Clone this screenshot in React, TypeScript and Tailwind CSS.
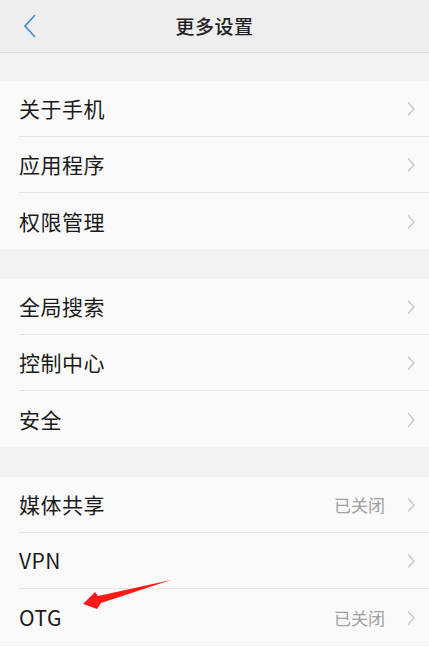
import React from "react";

const font = { fontFamily: '"Noto Sans CJK SC", "Noto Sans", Roboto, sans-serif' };

type Row = { label: string; value?: string };

const sections: Row[][] = [
  [{ label: "关于手机" }, { label: "应用程序" }, { label: "权限管理" }],
  [{ label: "全局搜索" }, { label: "控制中心" }, { label: "安全" }],
  [{ label: "媒体共享", value: "已关闭" }, { label: "VPN" }, { label: "OTG", value: "已关闭" }],
];

function Chevron() {
  return (
    <svg width="10" height="16" viewBox="0 0 10 16" className="shrink-0">
      <path d="M2 1.5 L8 8 L2 14.5" fill="none" stroke="#c9c9c9" strokeWidth="1.4" />
    </svg>
  );
}

export default function App() {
  return (
    <div className="relative w-[429px] h-[646px] overflow-hidden bg-[#f2f2f2]" style={font}>
      <div className="h-[53px] bg-[#eeeeee] border-b border-[#dcdcdc] flex items-center justify-center relative">
        <svg width="14" height="26" viewBox="0 0 14 26" className="absolute left-[23px] top-[13px]">
          <path d="M12 2 L2 13 L12 24" fill="none" stroke="#4a8fcd" strokeWidth="1.8" />
        </svg>
        <span className="text-[19px] font-medium text-[#222] tracking-[0.5px]">更多设置</span>
      </div>
      <div className="flex flex-col gap-[30px] pt-[28px]">
        {sections.map((sec, i) => (
          <div key={i} className="bg-[#fafafa]">
            {sec.map((r, j) => (
              <div key={j} className="pl-[19px]">
                <div
                  className={`h-[56px] pt-[1px] flex items-center pr-[13px] ${j < sec.length - 1 ? "border-b border-[#e6e6e6]" : ""}`}
                >
                  <span className="flex-1 text-[21px] tracking-[0.5px] text-[#1a1a1a]">{r.label}</span>
                  {r.value && <span className="text-[17px] text-[#a0a0a0] mr-[21px]">{r.value}</span>}
                  <Chevron />
                </div>
              </div>
            ))}
          </div>
        ))}
      </div>
      <svg className="absolute left-0 top-0" width="429" height="646" viewBox="0 0 429 646">
        <path d="M83 604 L95 592 L98 596 L171 580 L101 603 L97 609 Z" fill="#ff1a1a" />
      </svg>
    </div>
  );
}
